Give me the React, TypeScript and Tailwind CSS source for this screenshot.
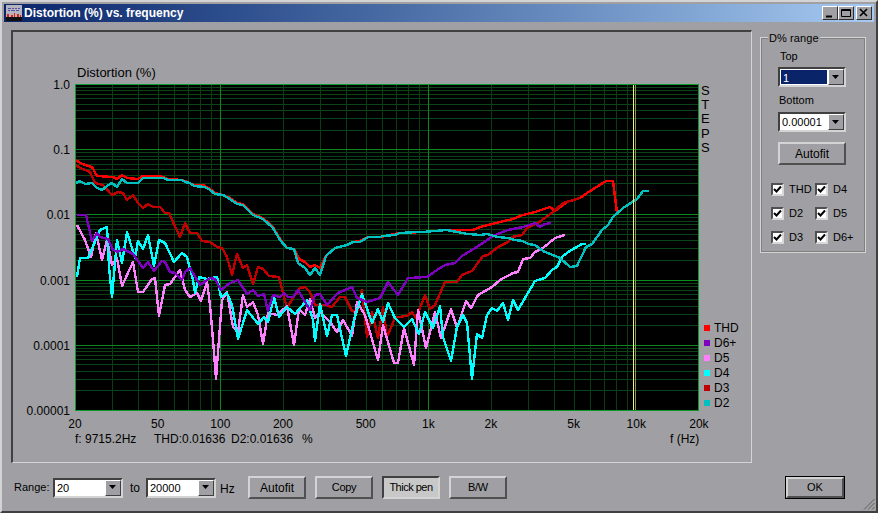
import React from 'react';

const PLOT_L = 75;
const PLOT_R = 698;
const PLOT_T = 84;
const PLOT_B = 410;
const DECADE_X = 208;
const DECADE_Y = 65.2;

const freqX = (f: number) => 220.3 + Math.log10(f / 100) * DECADE_X;
const fmt = (pts: number[][]) => pts.map((p) => p.join(',')).join(' ');

const D2 = [[76,183],[80,181],[85,184],[92,183],[97,188],[102,190],[107,186],[112,183],[117,187],[122,179],[127,183],[138,183],[143,178],[163,178],[168,180],[182,180],[185,182],[190,183],[194,186],[205,187],[210,190],[215,194],[223,195],[230,199],[237,204],[243,205],[253,215],[263,219],[273,228],[280,240],[287,248],[294,249],[298,263],[305,268],[310,275],[315,268],[320,275],[326,256],[335,248],[347,245],[353,242],[360,242],[368,237],[380,237],[383,236],[395,235],[400,233],[417,232],[423,232],[447,230],[457,232],[468,234],[480,235],[487,234],[498,237],[508,238],[515,240],[523,241],[528,244],[535,245],[543,251],[560,258],[570,267],[577,266],[586,247],[592,244],[602,230],[608,225],[613,217],[623,208],[637,199],[643,191],[649,191]];
const THD = [[76,160],[80,163],[85,165],[92,167],[97,176],[113,177],[117,179],[122,175],[127,178],[138,179],[143,176],[160,176],[165,178],[168,179],[182,180],[185,181],[194,185],[203,185],[210,189],[215,193],[223,195],[230,198],[237,203],[243,204],[253,214],[263,218],[273,227],[280,239],[287,248],[294,249],[299,259],[305,262],[310,267],[315,265],[320,268],[326,256],[335,248],[347,245],[353,242],[360,241],[368,237],[380,237],[395,234],[400,233],[423,232],[447,230],[473,230],[480,227],[500,222],[513,219],[523,215],[535,212],[550,207],[555,211],[567,202],[580,198],[587,193],[606,181],[613,181],[617,213]];
const D3 = [[76,165],[80,168],[90,172],[95,183],[103,185],[112,195],[118,192],[123,193],[127,200],[133,195],[138,203],[143,208],[148,204],[153,207],[160,207],[165,213],[169,213],[180,237],[185,223],[190,233],[197,233],[202,241],[210,242],[217,247],[222,248],[227,257],[232,275],[237,254],[243,268],[247,265],[253,284],[258,267],[263,269],[269,276],[279,277],[283,293],[287,308],[293,298],[300,288],[305,287],[310,292],[315,305],[325,305],[332,307],[340,297],[345,297],[352,311],[357,312],[362,290],[367,337],[372,312],[378,338],[383,307],[387,337],[395,318],[398,317],[407,316],[412,312],[416,318],[425,295],[430,309],[435,305],[445,282],[457,282],[462,275],[472,271],[483,256],[488,255],[498,247],[508,242],[512,237],[522,235],[527,228],[538,223],[553,212],[563,203],[580,198]];
const D6 = [[77,215],[86,215],[92,241],[97,233],[100,237],[108,239],[113,250],[118,252],[123,249],[133,254],[143,268],[148,262],[154,271],[162,261],[165,262],[170,272],[175,273],[182,280],[185,272],[190,268],[200,285],[210,278],[215,279],[221,290],[230,283],[238,280],[247,294],[253,290],[258,296],[264,294],[268,311],[273,295],[280,297],[284,293],[288,297],[293,297],[298,290],[310,310],[315,295],[320,294],[327,305],[338,293],[352,287],[357,298],[367,302],[380,298],[388,282],[398,295],[408,278],[427,277],[437,270],[445,265],[455,263],[462,256],[480,245],[493,236],[508,230],[523,227],[535,223],[540,227],[545,224],[551,223]];
const D5 = [[77,225],[85,240],[91,257],[96,233],[102,260],[107,240],[112,265],[117,258],[122,286],[133,262],[138,292],[143,292],[152,279],[155,278],[159,316],[165,285],[170,284],[180,270],[185,290],[190,297],[197,293],[201,301],[207,282],[210,305],[214,352],[216,379],[218,352],[222,300],[227,292],[233,327],[238,332],[243,295],[247,307],[253,302],[258,315],[263,344],[268,313],[277,315],[287,306],[294,345],[299,309],[305,315],[310,299],[315,318],[320,312],[330,322],[337,332],[343,320],[352,336],[357,302],[365,315],[378,360],[383,325],[394,363],[398,363],[404,328],[414,365],[418,310],[426,348],[435,312],[441,338],[451,309],[457,328],[466,301],[471,308],[478,295],[492,287],[500,280],[513,273],[518,272],[523,259],[530,258],[535,252],[543,248],[555,238],[565,235]];
const D4 = [[77,277],[80,258],[88,258],[100,230],[107,227],[109,267],[112,297],[117,240],[122,263],[127,232],[135,258],[138,241],[143,249],[148,235],[154,266],[159,240],[165,243],[174,262],[182,253],[187,257],[193,280],[195,293],[199,277],[207,279],[217,277],[221,297],[227,293],[232,305],[238,339],[247,310],[258,324],[264,317],[268,322],[274,297],[279,317],[287,307],[295,314],[307,300],[313,320],[315,341],[320,304],[327,336],[332,315],[337,315],[346,356],[354,320],[362,294],[372,323],[378,309],[383,322],[388,303],[395,318],[404,327],[412,319],[419,334],[425,312],[433,328],[440,306],[443,337],[451,361],[457,327],[463,315],[467,323],[472,379],[477,334],[482,338],[487,315],[492,308],[497,311],[503,303],[508,320],[513,300],[518,310],[525,298],[535,281],[545,278],[552,270],[557,267],[562,257],[568,252],[582,244],[586,244]];

const traces = [
  { pts: THD, color: '#ff0000' },
  { pts: D3, color: '#c00000' },
  { pts: D5, color: '#ff80ff' },
  { pts: D4, color: '#00ffff' },
  { pts: D6, color: '#8000c0' },
  { pts: D2, color: '#00c0c0' },
];

const legend = [
  { label: 'THD', color: 'bg-[#ff0000]' },
  { label: 'D6+', color: 'bg-[#8000c0]' },
  { label: 'D5', color: 'bg-[#ff80ff]' },
  { label: 'D4', color: 'bg-[#00ffff]' },
  { label: 'D3', color: 'bg-[#c00000]' },
  { label: 'D2', color: 'bg-[#00c0c0]' },
];

const yTicks = ['1.0', '0.1', '0.01', '0.001', '0.0001', '0.00001'];
const xTicks = [
  { label: '20', f: 20 },
  { label: '50', f: 50 },
  { label: '100', f: 100 },
  { label: '200', f: 200 },
  { label: '500', f: 500 },
  { label: '1k', f: 1000 },
  { label: '2k', f: 2000 },
  { label: '5k', f: 5000 },
  { label: '10k', f: 10000 },
  { label: '20k', f: 20000 },
];

const Plot = () => {
  const hMinor: number[] = [];
  for (let d = 0; d < 5; d++) {
    for (let m = 2; m < 10; m++) hMinor.push(PLOT_T + d * DECADE_Y + (1 - Math.log10(m)) * DECADE_Y);
  }
  const vMinor: number[] = [];
  for (const base of [10, 100, 1000]) {
    for (let m = 2; m < 10; m++) {
      const f = base * m;
      if (f > 20) vMinor.push(freqX(f));
    }
  }
  return (
    <svg width={624} height={327} viewBox={`${PLOT_L} ${PLOT_T} 624 327`} className="block bg-black" shapeRendering="crispEdges">
      {hMinor.map((y) => (
        <line key={y} x1={PLOT_L} x2={PLOT_R} y1={Math.round(y) + 0.5} y2={Math.round(y) + 0.5} stroke="#0b4419" />
      ))}
      {vMinor.map((x) => (
        <line key={x} y1={PLOT_T} y2={PLOT_B} x1={Math.round(x) + 0.5} x2={Math.round(x) + 0.5} stroke="#0a3c16" />
      ))}
      {[149, 214, 280, 345].map((y) => (
        <line key={y} x1={PLOT_L} x2={PLOT_R} y1={y + 0.5} y2={y + 0.5} stroke="#0a8a1e" />
      ))}
      {[220, 428].map((x) => (
        <line key={x} y1={PLOT_T} y2={PLOT_B} x1={x + 0.5} x2={x + 0.5} stroke="#0a8a1e" />
      ))}
      <g fill="none" strokeWidth={2.4} strokeLinejoin="round">
        {traces.map((t) => (
          <polyline key={t.color} points={fmt(t.pts)} stroke={t.color} />
        ))}
      </g>
      <line x1={633.5} x2={633.5} y1={PLOT_T} y2={PLOT_B} stroke="#f0f08c" />
      <line x1={635.5} x2={635.5} y1={PLOT_T} y2={PLOT_B} stroke="#8a9a30" />
      <rect x={75.5} y={84.5} width={623} height={326} fill="none" stroke="#0a9a28" />
    </svg>
  );
};

const Arrow = () => (
  <svg width="8" height="5" viewBox="0 0 8 5">
    <path d="M0 0h7L3.5 4z" fill="#000" />
  </svg>
);

// old-school sunken combo box
const Combo = ({ value, className, selected }: { value: string; className: string; selected?: boolean }) => (
  <div className={`flex h-[20px] border-2 border-t-[#404040] border-l-[#404040] border-r-[#d4d4d4] border-b-[#d4d4d4] bg-white ${className}`}>
    <div className={`flex-1 min-w-0 pl-[2px] text-[11px] leading-[16px] ${selected ? 'bg-[#0a246a] text-white border border-white' : 'text-black'}`}>
      {value}
    </div>
    <div className="w-[16px] flex items-center justify-center bg-[#a0a0a4] border border-t-white border-l-white border-r-[#404040] border-b-[#404040]">
      <Arrow />
    </div>
  </div>
);

const Btn = ({ label, className, active }: { label: string; className: string; active?: boolean }) => (
  <div
    className={`flex items-center justify-center border-2 text-black ${className} ${
      active
        ? 'bg-[#c8c8c8] border-t-[#404040] border-l-[#404040] border-r-[#d4d4d4] border-b-[#d4d4d4]'
        : 'border-t-[#d4d4d4] border-l-[#d4d4d4] border-r-[#505050] border-b-[#505050]'
    }`}
  >
    {label}
  </div>
);

const Check = ({ label }: { label: string }) => (
  <div className="flex items-center gap-[5px]">
    <div className="w-[13px] h-[13px] bg-white border-2 border-t-[#505050] border-l-[#505050] border-r-[#d8d8d8] border-b-[#d8d8d8] flex items-center justify-center">
      <svg width="9" height="9" viewBox="0 0 9 9">
        <path d="M1 4l2.5 2.5L8 1.5" fill="none" stroke="#000" strokeWidth="2" />
      </svg>
    </div>
    <span className="text-[11px] leading-[13px] text-black">{label}</span>
  </div>
);

const TitleBtn = ({ children }: { children: React.ReactNode }) => (
  <div className="w-[16px] h-[14px] bg-[#a0a0a4] border border-t-white border-l-white border-r-[#303030] border-b-[#303030] flex items-center justify-center">
    <svg width="12" height="10" viewBox="0 0 12 10" fill="none" stroke="#000">
      {children}
    </svg>
  </div>
);

export default function App() {
  return (
    <div
      className="relative w-[878px] h-[513px] overflow-hidden bg-[#a0a0a4] flex flex-col border-2 border-t-[#d4d4d4] border-l-[#d4d4d4] border-r-[#404040] border-b-[#404040] p-[2px]"
      style={{ fontFamily: '"Liberation Sans", Arial, sans-serif' }}
    >
      {/* title bar */}
      <div className="h-[18px] shrink-0 flex items-center pl-[2px] pr-[2px] bg-gradient-to-r from-[#0a246a] to-[#a6caf0]">
        <svg width="16" height="16" viewBox="0 0 16 16" className="shrink-0" shapeRendering="crispEdges">
          <rect width="16" height="16" fill="#b4b4c0" />
          <path d="M2 3.5h3M6 3.5h2M9 3.5h2M12 3.5h2M2 5.5h2M5 5.5h4M10 5.5h3" stroke="#3a3a9a" opacity="0.8" />
          <rect x="0" y="12" width="16" height="4" fill="#101010" />
          <path d="M1 9h2v3h-2zM5 10h2v2h-2zM8 8h1v4h-1zM11 9h2v3h-2zM14 10h1v2h-1z" fill="#e02010" />
        </svg>
        <span className="ml-[2px] text-white font-bold text-[12px] leading-none">Distortion (%) vs. frequency</span>
        <div className="ml-auto flex items-center">
          <TitleBtn>
            <path d="M2 8.5h6" strokeWidth="2" />
          </TitleBtn>
          <TitleBtn>
            <path d="M1.5 1.5h9v7h-9zM1.5 2.5h9" />
          </TitleBtn>
          <div className="ml-[2px]">
            <TitleBtn>
              <path d="M2 1l7 7M9 1L2 8" strokeWidth="1.6" />
            </TitleBtn>
          </div>
        </div>
      </div>

      <div className="flex-1 flex min-h-0 pl-[7px] pt-[8px]">
        {/* left column */}
        <div className="w-[741px] shrink-0 flex flex-col">
          <div className="relative h-[433px] border-2 border-t-[#404040] border-l-[#404040] border-r-[#d4d4d4] border-b-[#d4d4d4] border-r-[1px] border-b-[1px]">
            <div className="pl-[62px] pt-[52px]">
              <Plot />
            </div>
            <span className="absolute left-[64px] top-[34px] text-[13px] leading-[14px] text-black">Distortion (%)</span>
            {yTicks.map((t, i) => (
              <span key={t} className="absolute right-[681px] text-[12px] leading-[14px] text-black" style={{ top: 46 + i * 65.2 }}>
                {t}
              </span>
            ))}
            {xTicks.map((t) => (
              <span
                key={t.label}
                className="absolute -translate-x-1/2 top-[385px] text-[12px] leading-[14px] text-black"
                style={{ left: freqX(t.f) - 13 }}
              >
                {t.label}
              </span>
            ))}
            <div className="absolute left-[62px] top-[400px] flex text-[12px] leading-[14px] text-black whitespace-pre">
              <span className="w-[79px]">f: 9715.2Hz</span>
              <span className="w-[77px]">THD:0.01636</span>
              <span className="w-[71px]">D2:0.01636</span>
              <span>%</span>
            </div>
            <span className="absolute left-[657px] top-[400px] text-[12px] leading-[14px] text-black">f (Hz)</span>
            <div className="absolute left-[688px] top-[52px] flex flex-col items-center text-[13px] leading-[14.2px] text-black">
              {'STEPS'.split('').map((c, i) => (
                <span key={i}>{c}</span>
              ))}
            </div>
            <div className="absolute left-[691px] top-[288px] flex flex-col">
              {legend.map((l) => (
                <div key={l.label} className="h-[15px] flex items-center">
                  <div className={`w-[6px] h-[6px] ${l.color}`} />
                  <span className="ml-[4px] text-[12px] leading-none text-black">{l.label}</span>
                </div>
              ))}
            </div>
          </div>

          {/* bottom controls */}
          <div className="mt-[13px] flex items-center text-[12px] text-black">
            <span className="ml-[3px] w-[39px] text-[11px]">Range:</span>
            <Combo value="20" className="w-[70px]" />
            <span className="ml-[7px] w-[16px]">to</span>
            <Combo value="20000" className="w-[70px]" />
            <span className="ml-[4px] w-[28px] pt-[3px]">Hz</span>
            <Btn label="Autofit" className="w-[58px] h-[23px] text-[12px]" />
            <Btn label="Copy" className="w-[58px] h-[23px] ml-[9px] text-[11px] tracking-[-0.3px]" />
            <Btn label="Thick pen" className="w-[58px] h-[23px] ml-[9px] text-[11px] tracking-[-0.5px]" active />
            <Btn label="B/W" className="w-[58px] h-[23px] ml-[9px] text-[11px] tracking-[-0.3px]" />
          </div>
        </div>

        {/* right column */}
        <div className="flex-1 min-w-0 flex flex-col pl-[8px] pt-[7px] pr-[8px]">
          <div className="relative h-[216px] w-[106px] border border-[#d4d4d4] outline outline-1 outline-[#808080] -outline-offset-2">
            <span className="absolute left-[7px] -top-[6px] bg-[#a0a0a4] px-[1px] text-[11px] leading-[12px] tracking-[0.1px] text-black">D% range</span>
            <div className="pl-[19px] pt-[11px] text-[11px] leading-[14px] text-black">Top</div>
            <Combo value="1" selected className="w-[68px] h-[20px] ml-[17px] mt-[4px]" />
            <div className="pl-[18px] pt-[6px] text-[11px] leading-[14px] text-black">Bottom</div>
            <Combo value="0.00001" className="w-[68px] h-[20px] ml-[17px] mt-[5px]" />
            <Btn label="Autofit" className="w-[68px] h-[23px] ml-[17px] mt-[10px] text-[12px]" />
            <div className="grid grid-cols-[44px_1fr] gap-y-[11px] ml-[10px] mt-[18px]">
              <Check label="THD" />
              <Check label="D4" />
              <Check label="D2" />
              <Check label="D5" />
              <Check label="D3" />
              <Check label="D6+" />
            </div>
          </div>
          <div className="mt-auto mb-[10px] ml-[25px]">
            <div className="w-[60px] h-[23px] border border-black">
              <Btn label="OK" className="w-full h-full text-[11px]" />
            </div>
          </div>
        </div>
      </div>

      {/* resize grip */}
      <svg width="12" height="12" viewBox="0 0 12 12" className="absolute right-[1px] bottom-[1px]" stroke="#606060" fill="none">
        <path d="M1 11.5L11.5 1M5 11.5L11.5 5M9 11.5L11.5 9" />
      </svg>
    </div>
  );
}
